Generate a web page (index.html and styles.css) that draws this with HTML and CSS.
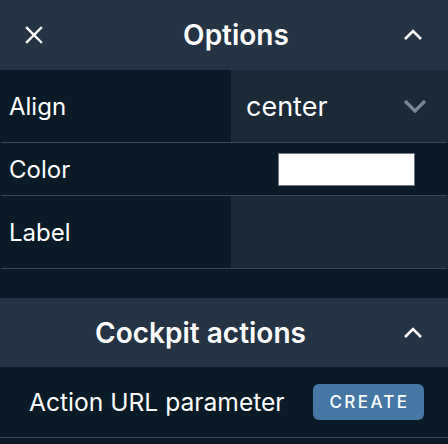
FILE: index.html
```html
<!DOCTYPE html>
<html>
<head>
<meta charset="utf-8">
<link rel="stylesheet" href="styles.css">
</head>
<body>
<div class="panel">
  <div class="header header-options">
    <div class="hicon left">
      <svg width="18" height="18" viewBox="0 0 18 18"><path d="M2 2 L16 16 M16 2 L2 16" stroke="#fff" stroke-width="2.4" stroke-linecap="square" fill="none"/></svg>
    </div>
    <div class="title">Options</div>
    <div class="hicon right">
      <svg width="20" height="12" viewBox="0 0 20 12"><path d="M2 10 L10 2 L18 10" stroke="#fff" stroke-width="2.6" fill="none"/></svg>
    </div>
  </div>

  <div class="row row-align">
    <div class="label">Align</div>
    <div class="value shaded">
      <span class="value-text">center</span>
      <svg class="caret" width="24" height="14" viewBox="0 0 24 14"><path d="M2 2 L12 12 L22 2" stroke="#7b8694" stroke-width="3.2" fill="none"/></svg>
    </div>
  </div>
  <div class="sep"></div>
  <div class="row row-color">
    <div class="label">Color</div>
    <div class="value swatch-cell"><div class="swatch"></div></div>
  </div>
  <div class="sep"></div>
  <div class="row row-label">
    <div class="label">Label</div>
    <div class="value shaded"></div>
  </div>
  <div class="sep"></div>
  <div class="gap"></div>

  <div class="header header-cockpit">
    <div class="title">Cockpit actions</div>
    <div class="hicon right">
      <svg width="20" height="12" viewBox="0 0 20 12"><path d="M2 10 L10 2 L18 10" stroke="#fff" stroke-width="2.6" fill="none"/></svg>
    </div>
  </div>
  <div class="action-row">
    <span class="action-label">Action URL parameter</span>
    <button class="btn">CREATE</button>
  </div>
  <div class="sep full"></div>
</div>
</body>
</html>
```
FILE: styles.css
```css
html, body {
  margin: 0;
  padding: 0;
  background: #0a1b27;
}
body {
  width: 448px;
  height: 444px;
  overflow: hidden;
  font-family: Inter, "Noto Sans", sans-serif;
  color: #ffffff;
}
.panel {
  display: flex;
  flex-direction: column;
}
.header {
  height: 70px;
  background: #243444;
  display: flex;
  align-items: center;
}
.header-cockpit {
  height: 69px;
}
.hicon {
  display: flex;
  align-items: center;
}
.hicon.left {
  width: 77px;
  padding-left: 25px;
  box-sizing: border-box;
}
.hicon.right {
  width: 53px;
  padding-left: 8px;
  box-sizing: border-box;
}
.header-cockpit .title {
  margin-left: 6px;
}
.title {
  flex: 1;
  text-align: center;
  font-size: 28px;
  font-weight: 600;
}
.row {
  display: flex;
  height: 72px;
}
.row-color {
  height: 52px;
}
.row-label {
  height: 72px;
}
.label {
  width: 231px;
  display: flex;
  align-items: center;
  padding-left: 9px;
  box-sizing: border-box;
  font-size: 24px;
}
.value {
  flex: 1;
  display: flex;
  align-items: center;
}
.shaded {
  background: #1c2a37;
}
.value-text {
  flex: 1;
  padding-left: 15px;
  font-size: 27px;
}
.caret {
  margin-right: 21px;
}
.swatch-cell {
  padding-left: 47px;
}
.swatch {
  width: 135px;
  height: 31px;
  background: #ffffff;
  border: 1px solid #6d7680;
}
.sep {
  height: 1px;
  background: #3a4856;
  margin: 0 1px;
}
.sep.full {
  margin: 0;
}
.gap {
  height: 29px;
}
.action-row {
  height: 70px;
  display: flex;
  align-items: center;
  justify-content: space-between;
  padding: 0 24px 0 29px;
}
.action-label {
  font-size: 24.6px;
}
.btn {
  width: 111px;
  height: 36px;
  border: none;
  border-radius: 6px;
  background: #4677a5;
  color: #ffffff;
  font-family: Inter, "Noto Sans", sans-serif;
  font-size: 17px;
  font-weight: 500;
  letter-spacing: 2.4px;
  padding: 0 0 0 2px;
}
```
